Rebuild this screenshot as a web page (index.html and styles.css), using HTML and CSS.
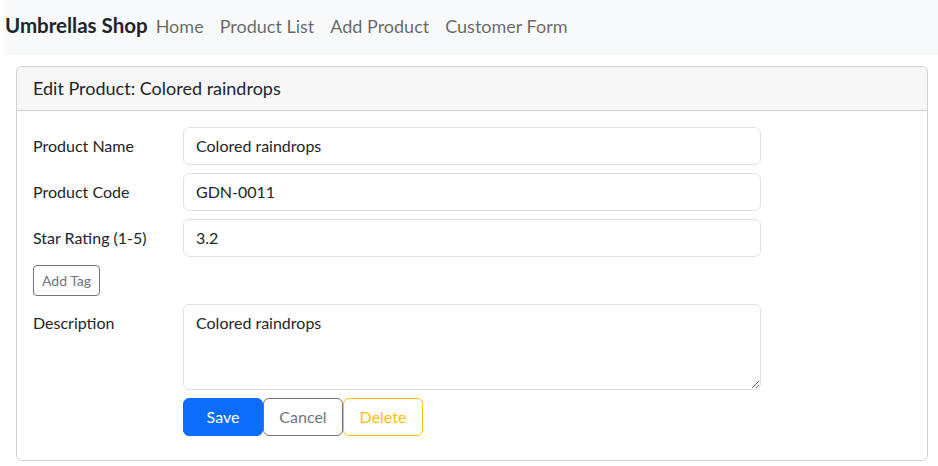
FILE: index.html
```html
<!DOCTYPE html>
<html lang="en">
<head>
<meta charset="utf-8">
<title>Umbrellas Shop</title>
<link rel="stylesheet" href="styles.css">
</head>
<body>
<nav class="navbar">
  <a class="brand" href="#">Umbrellas Shop</a>
  <ul class="nav">
    <li><a class="nav-link" href="#">Home</a></li>
    <li><a class="nav-link" href="#">Product List</a></li>
    <li><a class="nav-link" href="#">Add Product</a></li>
    <li><a class="nav-link" href="#">Customer Form</a></li>
  </ul>
</nav>
<main class="container">
  <section class="card">
    <div class="card-header">Edit Product: Colored raindrops</div>
    <form class="card-body">
      <div class="row">
        <label class="col-label" for="name">Product Name</label>
        <div class="col-field"><input class="form-control" id="name" type="text" value="Colored raindrops"></div>
      </div>
      <div class="row">
        <label class="col-label" for="code">Product Code</label>
        <div class="col-field"><input class="form-control" id="code" type="text" value="GDN-0011"></div>
      </div>
      <div class="row">
        <label class="col-label" for="rating">Star Rating (1-5)</label>
        <div class="col-field"><input class="form-control" id="rating" type="text" value="3.2"></div>
      </div>
      <div class="row">
        <button type="button" class="btn btn-sm btn-outline-secondary">Add Tag</button>
      </div>
      <div class="row">
        <label class="col-label" for="desc">Description</label>
        <div class="col-field"><textarea class="form-control" id="desc" rows="3">Colored raindrops</textarea></div>
      </div>
      <div class="row actions">
        <button type="button" class="btn btn-primary">Save</button>
        <button type="button" class="btn btn-outline-secondary">Cancel</button>
        <button type="button" class="btn btn-outline-warning">Delete</button>
      </div>
    </form>
  </section>
</main>
</body>
</html>
```
FILE: styles.css
```css
* { box-sizing: border-box; }
html, body { margin: 0; padding: 0; }
body {
  font-family: Lato, "Open Sans", sans-serif;
  font-size: 16px;
  line-height: 1.5;
  color: #212529;
  background: #fff;
}
a { text-decoration: none; }

.navbar {
  margin-left: 3px;
  height: 55px;
  background: #f8f9fa;
  display: flex;
  align-items: center;
  padding: 0 2px 2px;
}
.brand {
  font-size: 20.5px;
  font-weight: 700;
  color: #212529;
  line-height: 30px;
  margin-top: -4px;
  margin-right: 0;
}
.nav {
  list-style: none;
  margin: 0;
  padding: 0;
  display: flex;
}
.nav-link {
  display: block;
  padding: 0 8px;
  font-size: 18px;
  line-height: 27px;
  color: rgba(0, 0, 0, 0.6);
}

.container {
  padding: 11px 10px 0 16px;
}
.card {
  border: 1px solid #d0d0d0;
  border-radius: 6px;
  background: #fff;
  overflow: hidden;
}
.card-header {
  background: #f7f7f7;
  border-bottom: 1px solid #d0d0d0;
  padding: 8px 16px;
  font-size: 18px;
  line-height: 27px;
  color: #212529;
}
.card-body {
  padding: 16px 16px 16px;
  display: flex;
  flex-direction: column;
  gap: 8px;
}
.row {
  display: flex;
  align-items: flex-start;
}
.col-label {
  width: 150px;
  flex: none;
  padding-top: 7px;
  line-height: 24px;
}
.col-field {
  width: 578px;
}
.form-control {
  display: block;
  width: 100%;
  font: inherit;
  font-size: 16px;
  line-height: 24px;
  color: #212529;
  padding: 6px 12px;
  border: 1px solid #dee2e6;
  border-radius: 6px;
  background: #fff;
}
textarea.form-control {
  height: 86px;
  resize: vertical;
}
.btn {
  font: inherit;
  font-size: 16px;
  line-height: 24px;
  padding: 6px 12px;
  border: 1px solid transparent;
  border-radius: 6px;
  background: transparent;
  cursor: pointer;
}
.btn-sm {
  font-size: 14px;
  line-height: 21px;
  padding: 4px 8px;
  border-radius: 4px;
}
.btn-primary {
  background: #0d6efd;
  border-color: #0d6efd;
  color: #fff;
}
.btn-outline-secondary {
  border-color: #6c757d;
  color: #6c757d;
}
.btn-outline-warning {
  border-color: #ffc107;
  color: #ffc107;
}
.actions {
  padding-left: 150px;
  margin-bottom: 8px;
}
.actions .btn {
  width: 80px;
}
```
